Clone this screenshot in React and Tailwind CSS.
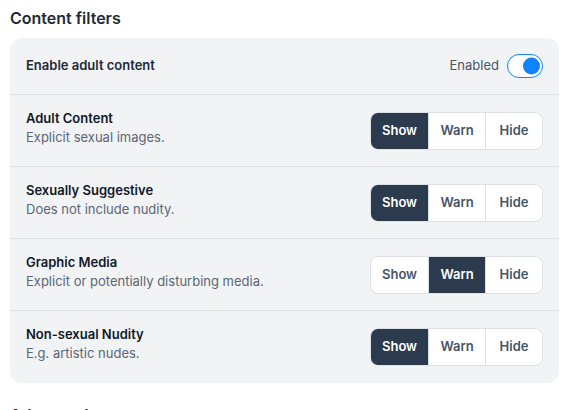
import { useState } from 'react';

const FILTERS = [
  { id: 'adult', label: 'Adult Content', desc: 'Explicit sexual images.', value: 'show' },
  { id: 'suggestive', label: 'Sexually Suggestive', desc: 'Does not include nudity.', value: 'show' },
  { id: 'graphic', label: 'Graphic Media', desc: 'Explicit or potentially disturbing media.', value: 'warn' },
  { id: 'nudity', label: 'Non-sexual Nudity', desc: 'E.g. artistic nudes.', value: 'show' },
];

const OPTIONS = [
  { key: 'show', label: 'Show' },
  { key: 'warn', label: 'Warn' },
  { key: 'hide', label: 'Hide' },
];

function Segmented({ value, onChange }) {
  return (
    <div className="flex h-[38px] rounded-lg border border-[#dde1e6] bg-white overflow-hidden">
      {OPTIONS.map((o, i) => {
        const active = o.key === value;
        return (
          <button
            key={o.key}
            onClick={() => onChange(o.key)}
            className={`w-[57px] text-[13px] font-semibold ${i > 0 ? 'border-l border-[#dde1e6]' : ''} ${
              active ? 'bg-[#2c3a4e] text-white border-[#2c3a4e]' : 'text-[#475569]'
            }`}
          >
            {o.label}
          </button>
        );
      })}
    </div>
  );
}

export default function App() {
  const [enabled, setEnabled] = useState(true);
  const [values, setValues] = useState(
    Object.fromEntries(FILTERS.map(f => [f.id, f.value]))
  );

  return (
    <div className="min-h-screen bg-white px-[10px] pt-[6px] font-['Inter',sans-serif] text-[#111827]">
      <h2 className="text-[16px] leading-6 font-semibold text-[#1f2937] mb-2">Content filters</h2>

      <div className="rounded-xl bg-[#f1f3f5] overflow-hidden">
        {/* Master toggle */}
        <div className="flex items-center justify-between h-[57px] px-4 border-b border-[#dcdfe3]">
          <span className="text-[13px] font-semibold text-[#1f2937]">Enable adult content</span>
          <div className="flex items-center gap-2">
            <span className="text-[13px] text-[#4b5563]">Enabled</span>
            <button
              onClick={() => setEnabled(e => !e)}
              className={`relative w-[36px] h-[24px] rounded-full border-[1.5px] bg-white ${
                enabled ? 'border-[#1083fe]' : 'border-[#cbd2d9]'
              }`}
            >
              <span
                className={`absolute top-1/2 -translate-y-1/2 w-[17px] h-[17px] rounded-full ${
                  enabled ? 'right-[2px] bg-[#1083fe]' : 'left-[2px] bg-[#cbd2d9]'
                }`}
              />
            </button>
          </div>
        </div>

        {FILTERS.map((f, i) => (
          <div
            key={f.id}
            className={`flex items-center justify-between h-[72px] px-4 ${
              i < FILTERS.length - 1 ? 'border-b border-[#dcdfe3]' : ''
            }`}
          >
            <div className="flex flex-col mb-[6px]">
              <span className="text-[13px] leading-[19px] font-semibold text-[#111827]">{f.label}</span>
              <span className="text-[13px] leading-[19px] text-[#5b6675]">{f.desc}</span>
            </div>
            <Segmented
              value={values[f.id]}
              onChange={v => setValues(s => ({ ...s, [f.id]: v }))}
            />
          </div>
        ))}
      </div>

      <h2 className="mt-[20px] text-[16px] leading-6 font-semibold text-[#1f2937]">Advanced</h2>
    </div>
  );
}
